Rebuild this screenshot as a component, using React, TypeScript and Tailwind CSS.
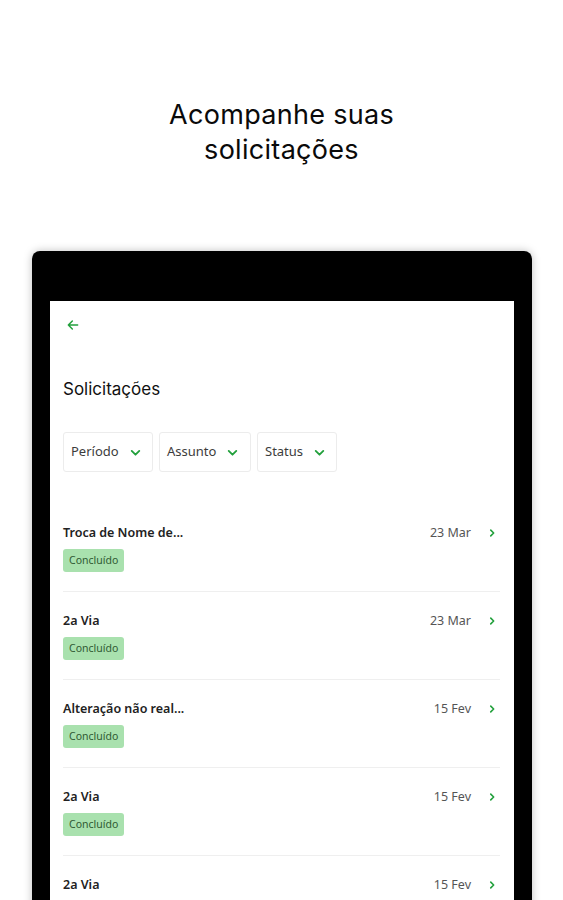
import React from "react";

const rows = [
  { title: "Troca de Nome de...", date: "23 Mar", badge: true },
  { title: "2a Via", date: "23 Mar", badge: true },
  { title: "Alteração não real...", date: "15 Fev", badge: true },
  { title: "2a Via", date: "15 Fev", badge: true },
  { title: "2a Via", date: "15 Fev", badge: true },
];

function ChevronDown() {
  return (
    <svg width="13" height="13" viewBox="0 0 24 24" fill="none" stroke="#22a03c" strokeWidth="3.4" strokeLinecap="round" strokeLinejoin="round">
      <path d="M5 9l7 7 7-7" />
    </svg>
  );
}

function ChevronRight() {
  return (
    <svg width="10" height="10" viewBox="0 0 24 24" fill="none" stroke="#22a03c" strokeWidth="3.8" strokeLinecap="round" strokeLinejoin="round">
      <path d="M9 5l7 7-7 7" />
    </svg>
  );
}

function Chip({ label, w }: { label: string; w: string }) {
  return (
    <div className={`flex h-[40px] items-center gap-[10px] rounded-[3px] border border-[#ececec] pl-[7px] ${w}`}>
      <span className="text-[13px] text-[#3c3c3c]">{label}</span>
      <ChevronDown />
    </div>
  );
}

export default function App() {
  return (
    <div className="h-[900px] overflow-hidden bg-white" style={{ fontFamily: "'Noto Sans', 'Open Sans', sans-serif" }}>
      <h1
        className="pt-[97px] text-center text-[27px] leading-[35px] tracking-[0.3px] text-[#0a0a0a]"
        style={{ fontFamily: "Inter, 'Noto Sans', sans-serif" }}
      >
        Acompanhe suas
        <br />
        solicitações
      </h1>
      <div className="ml-[32px] mt-[84px] w-[500px] rounded-t-[8px] bg-black px-[18px] pt-[50px] shadow-[0_0_8px_rgba(0,0,0,0.25)]">
        <div className="h-[700px] bg-white px-[13px]">
          <div className="flex h-[46px] items-center pl-[2px] pt-[2px]">
            <svg width="16" height="16" viewBox="0 0 24 24" fill="none" stroke="#22a03c" strokeWidth="2.2" strokeLinecap="round" strokeLinejoin="round">
              <path d="M19 12H5M11 6l-6 6 6 6" />
            </svg>
          </div>
          <div
            className="mt-[30px] text-[17px] leading-[24px] text-[#111]"
            style={{ fontFamily: "Inter, 'Noto Sans', sans-serif" }}
          >
            Solicitações
          </div>
          <div className="mt-[31px] flex gap-[6px]">
            <Chip label="Período" w="w-[90px]" />
            <Chip label="Assunto" w="w-[92px]" />
            <Chip label="Status" w="w-[80px]" />
          </div>
          <div className="mt-[32px] w-[437px]">
            {rows.map((r, i) => (
              <div key={i} className="border-b border-[#efefef] pb-[19px] pt-[19px]">
                <div className="flex h-[20px] items-center">
                  <span className="flex-1 text-[12.5px] font-semibold text-[#222]">{r.title}</span>
                  <span className="text-[12.5px] text-[#555]">{r.date}</span>
                  <span className="ml-[16px] mr-[3px] flex items-center">
                    <ChevronRight />
                  </span>
                </div>
                {r.badge && (
                  <div className="mt-[6px] inline-flex h-[23px] items-center rounded-[3px] bg-[#a9e1ae] px-[6px] text-[10.5px] text-[#2f5a33]">
                    Concluído
                  </div>
                )}
              </div>
            ))}
          </div>
        </div>
      </div>
    </div>
  );
}
